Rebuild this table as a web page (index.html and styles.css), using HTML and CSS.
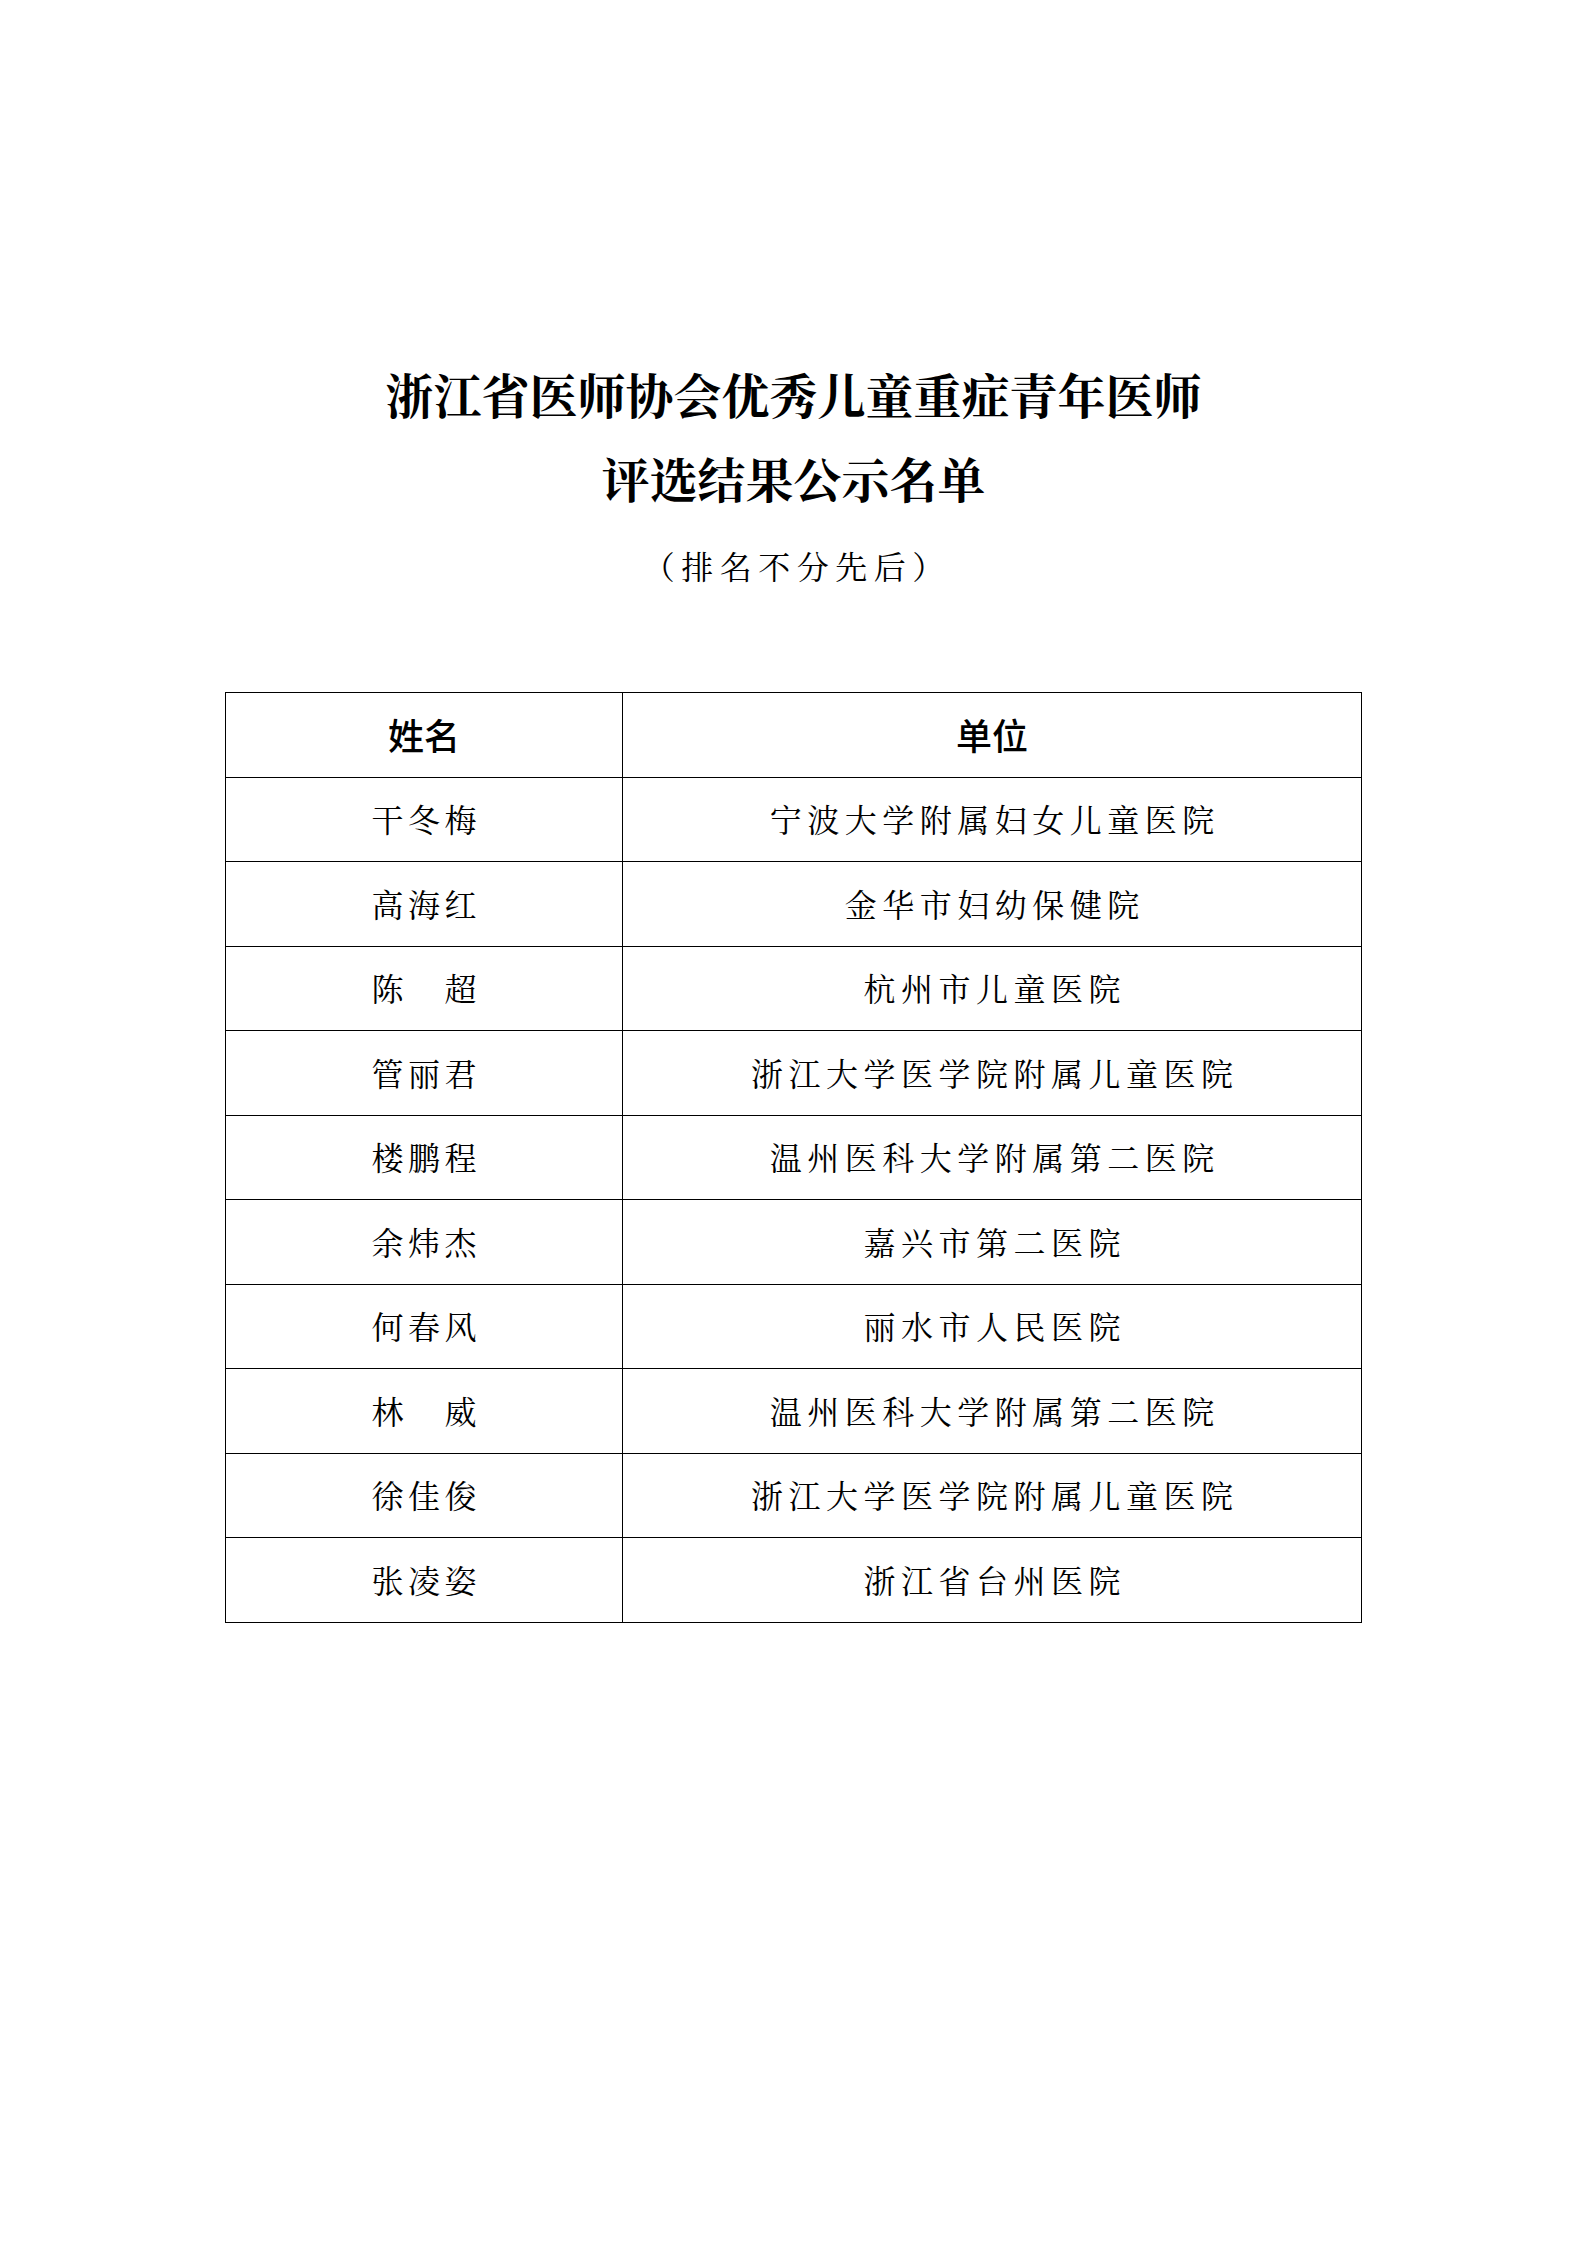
FILE: index.html
```html
<!DOCTYPE html>
<html lang="zh-CN">
<head>
<meta charset="utf-8">
<title>浙江省医师协会优秀儿童重症青年医师评选结果公示名单</title>
<link rel="stylesheet" href="styles.css">
</head>
<body>
<main class="page">
  <header class="heading">
    <h1 class="title">浙江省医师协会优秀儿童重症青年医师<br>评选结果公示名单</h1>
    <p class="subtitle"><span class="sp">（排名不分先后）</span></p>
  </header>
  <table class="list">
    <thead>
      <tr><th class="col-name">姓名</th><th class="col-unit">单位</th></tr>
    </thead>
    <tbody>
      <tr><td><span class="nm">干冬梅</span></td><td><span class="un">宁波大学附属妇女儿童医院</span></td></tr>
      <tr><td><span class="nm">高海红</span></td><td><span class="un">金华市妇幼保健院</span></td></tr>
      <tr><td><span class="nm">陈　超</span></td><td><span class="un">杭州市儿童医院</span></td></tr>
      <tr><td><span class="nm">管丽君</span></td><td><span class="un">浙江大学医学院附属儿童医院</span></td></tr>
      <tr><td><span class="nm">楼鹏程</span></td><td><span class="un">温州医科大学附属第二医院</span></td></tr>
      <tr><td><span class="nm">余炜杰</span></td><td><span class="un">嘉兴市第二医院</span></td></tr>
      <tr><td><span class="nm">何春风</span></td><td><span class="un">丽水市人民医院</span></td></tr>
      <tr><td><span class="nm">林　威</span></td><td><span class="un">温州医科大学附属第二医院</span></td></tr>
      <tr><td><span class="nm">徐佳俊</span></td><td><span class="un">浙江大学医学院附属儿童医院</span></td></tr>
      <tr><td><span class="nm">张凌姿</span></td><td><span class="un">浙江省台州医院</span></td></tr>
    </tbody>
  </table>
</main>
</body>
</html>
```

FILE: styles.css
```css
html, body {
  margin: 0;
  padding: 0;
  background: #ffffff;
  color: #000000;
}

.page {
  width: 1587px;
  min-height: 2245px;
  padding-top: 352px;
  box-sizing: border-box;
  font-family: "Noto Serif CJK SC", "Noto Sans CJK SC", "Liberation Serif", serif;
}

.heading {
  text-align: center;
}

.title {
  margin: 0;
  font-size: 48px;
  line-height: 84px;
  font-weight: 700;
  letter-spacing: 0;
}

.subtitle {
  margin: 0;
  padding-top: 3px;
  font-size: 32px;
  line-height: 84px;
  font-weight: 400;
}

.sp {
  letter-spacing: 6.5px;
  margin-right: -6.5px;
}

.list {
  margin: 85px auto 0;
  width: 1137px;
  border-collapse: collapse;
  table-layout: fixed;
}

.list th,
.list td {
  border: 1px solid #000;
  height: 80px;
  padding: 0 0 3px 0;
  text-align: center;
  vertical-align: middle;
  font-size: 32px;
  line-height: 40px;
  font-weight: 400;
}

.list th {
  height: 81px;
  font-family: "Noto Sans CJK SC", "Liberation Sans", sans-serif;
  font-size: 36px;
  font-weight: 500;
}

.list tbody tr:nth-child(even) td {
  height: 81px;
}

.col-name {
  width: 396px;
}

.nm {
  letter-spacing: 4.5px;
  margin-right: -4.5px;
}

.un {
  letter-spacing: 5.5px;
  margin-right: -5.5px;
}
```
